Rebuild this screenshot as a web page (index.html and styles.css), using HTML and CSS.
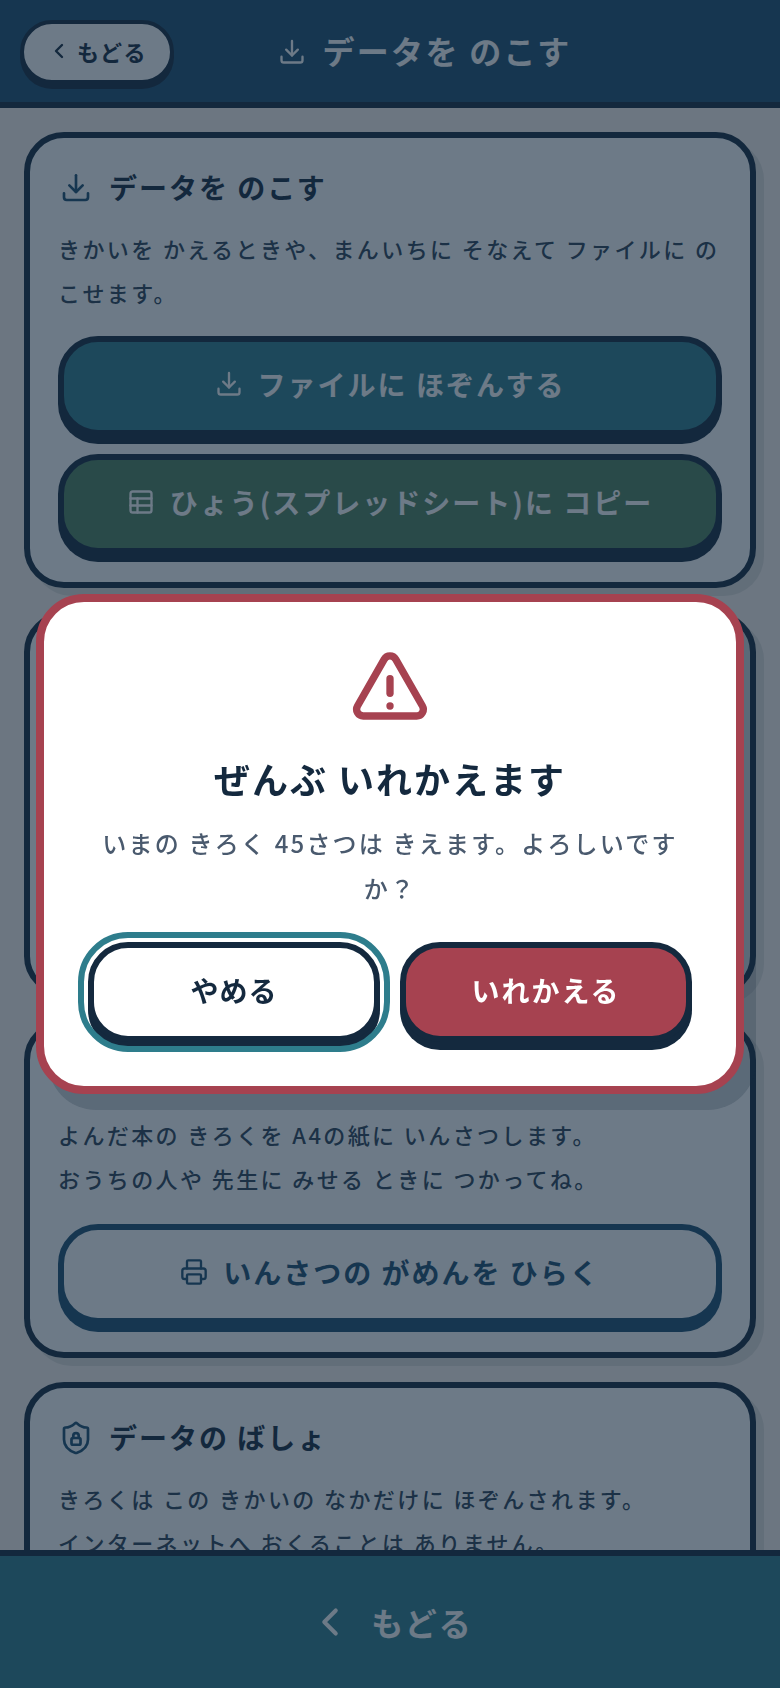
FILE: index.html
```html
<!DOCTYPE html>
<html lang="ja">
<head>
<meta charset="utf-8">
<title>データを のこす</title>
<link rel="stylesheet" href="styles.css">
</head>
<body>
<div class="app">
  <header class="topbar">
    <button class="back" type="button">
      <svg class="i i-back" viewBox="0 0 24 24"><path d="m15 18-6-6 6-6"/></svg>
      <span>もどる</span>
    </button>
    <h1 class="page-title">
      <svg class="i i-28" viewBox="0 0 24 24"><path d="M12 2.5V15"/><path d="m7 10 5 5 5-5"/><path d="M21 16v3a2 2 0 0 1-2 2H5a2 2 0 0 1-2-2v-3"/></svg>
      <span>データを のこす</span>
    </h1>
    <div class="spacer"></div>
  </header>

  <main class="content">
    <section class="card">
      <h2 class="card-title">
        <span class="ico-box"><svg class="i i-32" viewBox="0 0 24 24"><path d="M12 2.5V15"/><path d="m7 10 5 5 5-5"/><path d="M21 16v3a2 2 0 0 1-2 2H5a2 2 0 0 1-2-2v-3"/></svg></span>
        <span>データを のこす</span>
      </h2>
      <p class="body">きかいを かえるときや、まんいちに そなえて ファイルに のこせます。</p>
      <button class="btn btn-primary" type="button">
        <svg class="i i-28" viewBox="0 0 24 24"><path d="M12 2.5V15"/><path d="m7 10 5 5 5-5"/><path d="M21 16v3a2 2 0 0 1-2 2H5a2 2 0 0 1-2-2v-3"/></svg>
        <span>ファイルに ほぞんする</span>
      </button>
      <button class="btn btn-green" type="button">
        <svg class="i i-28" viewBox="0 0 24 24"><rect x="3" y="3" width="18" height="18" rx="2"/><path d="M3 9h18"/><path d="M3 15h18"/><path d="M9 9v12"/></svg>
        <span>ひょう(スプレッドシート)に コピー</span>
      </button>
    </section>

    <section class="card card-covered"></section>

    <section class="card card-print">
      <p class="body">よんだ本の きろくを A4の紙に いんさつします。<br>おうちの人や 先生に みせる ときに つかってね。</p>
      <button class="btn btn-outline" type="button">
        <svg class="i i-28" viewBox="0 0 24 24"><path d="M6 18H4a2 2 0 0 1-2-2v-5a2 2 0 0 1 2-2h16a2 2 0 0 1 2 2v5a2 2 0 0 1-2 2h-2"/><path d="M6 9V3a1 1 0 0 1 1-1h10a1 1 0 0 1 1 1v6"/><rect x="6" y="14" width="12" height="8" rx="1"/></svg>
        <span>いんさつの がめんを ひらく</span>
      </button>
    </section>

    <section class="card">
      <h2 class="card-title">
        <span class="ico-box"><svg class="i i-36" viewBox="0 0 24 24"><path d="M20 13c0 5-3.5 7.5-7.66 8.95a1 1 0 0 1-.67-.01C7.5 20.5 4 18 4 13V6a1 1 0 0 1 1-1c2 0 4.5-1.2 6.24-2.72a1.17 1.17 0 0 1 1.52 0C14.51 3.81 17 5 19 5a1 1 0 0 1 1 1z"/><rect x="9" y="12" width="6" height="4.5" rx="1"/><path d="M10.2 12v-1.5a1.8 1.8 0 0 1 3.6 0V12"/></svg></span>
        <span>データの ばしょ</span>
      </h2>
      <p class="body">きろくは この きかいの なかだけに ほぞんされます。<br>インターネットへ おくることは ありません。</p>
    </section>
  </main>

  <footer class="bottombar">
    <svg class="i i-46" viewBox="0 0 24 24"><path d="m15 18-6-6 6-6"/></svg>
    <span>もどる</span>
  </footer>
</div>

<div class="overlay">
  <div class="modal" role="dialog">
    <svg class="warn" viewBox="0 0 24 24"><path d="m21.73 18-8-14a2 2 0 0 0-3.48 0l-8 14A2 2 0 0 0 4 21h16a2 2 0 0 0 1.73-3"/><path d="M12 9.8v4.4"/><path d="M12 18h.01"/></svg>
    <h2 class="modal-title">ぜんぶ いれかえます</h2>
    <p class="modal-text">いまの きろく 45さつは きえます。よろしいですか？</p>
    <div class="modal-actions">
      <button class="mbtn mbtn-cancel" type="button">やめる</button>
      <button class="mbtn mbtn-danger" type="button">いれかえる</button>
    </div>
  </div>
</div>
</body>
</html>
```
FILE: styles.css
```css
* { box-sizing: border-box; }
html, body { margin: 0; padding: 0; height: 100%; }
body {
  font-family: "Noto Sans CJK JP", "Noto Sans", sans-serif;
  background: #fbf4ee;
  color: #14293e;
  overflow: hidden;
}
h1, h2, p { margin: 0; }
button { font-family: inherit; cursor: pointer; }

.i { fill: none; stroke: currentColor; stroke-width: 2; stroke-linecap: round; stroke-linejoin: round; flex: none; display: block; }
.i-back { width: 24px; height: 24px; stroke-width: 2.4; }
.i-28 { width: 28px; height: 28px; }
.i-32 { width: 32px; height: 32px; }
.i-36 { width: 36px; height: 36px; stroke-width: 1.8; }
.i-46 { width: 46px; height: 46px; stroke-width: 2.1; }

.app { height: 1688px; display: flex; flex-direction: column; }

.topbar {
  height: 108px;
  flex: none;
  display: flex;
  align-items: center;
  padding: 20px 20px 18px;
  background: #1c4e70;
  border-bottom: 6px solid #14293e;
  color: #fff;
}
.back {
  width: 154px;
  height: 64px;
  flex: none;
  display: flex;
  align-items: center;
  justify-content: center;
  gap: 6px;
  background: #fff;
  border: 4px solid #14293e;
  border-radius: 32px;
  box-shadow: 0 5px 0 #14293e;
  color: #14293e;
  font-size: 22px;
  font-weight: 700;
  letter-spacing: 1.5px;
  padding: 0 0 3px;
}
.page-title {
  flex: 1;
  display: flex;
  align-items: center;
  justify-content: center;
  gap: 16px;
  font-size: 32px;
  font-weight: 700;
  letter-spacing: 2.3px;
  padding-bottom: 4px;
}
.page-title .i { margin-top: 4px; }
.spacer { width: 84px; flex: none; }

.content {
  flex: 1;
  min-height: 0;
  overflow: hidden;
  padding: 24px;
  display: flex;
  flex-direction: column;
  gap: 24px;
}
.card {
  flex: none;
  background: #fff;
  border: 6px solid #14293e;
  border-radius: 40px;
  padding: 28px;
  box-shadow: 8px 8px 0 rgba(20, 41, 62, .1);
}
.card-covered { height: 384px; }
.card-print { padding-top: 70px; }
.card-print .btn { margin-top: 24px; }
.card-title {
  display: flex;
  align-items: center;
  gap: 15px;
  height: 44px;
  font-size: 28px;
  font-weight: 700;
  letter-spacing: 2px;
}
.card-title span:last-child { padding-bottom: 2px; }
.ico-box { width: 36px; display: flex; justify-content: center; color: #1c4e70; }
.body {
  margin-top: 16px;
  font-size: 22px;
  line-height: 44px;
  letter-spacing: 2.4px;
  font-weight: 500;
  color: #2b3f55;
}
.btn {
  width: 100%;
  height: 100px;
  margin-top: 22px;
  display: flex;
  align-items: center;
  justify-content: center;
  gap: 15px;
  border: 6px solid #14293e;
  border-radius: 40px;
  box-shadow: 0 8px 0 #14293e;
  color: #fff;
  font-size: 28px;
  font-weight: 700;
  letter-spacing: 2px;
  padding: 0 0 4px;
}
.btn + .btn { margin-top: 18px; }
.btn-primary { background: #2e7d8c; }
.btn-green { background: #4e805e; }
.btn-outline {
  background: #fff;
  color: #1c4e70;
  border-color: #1c4e70;
  box-shadow: 0 8px 0 #1c4e70;
}

.bottombar {
  height: 138px;
  flex: none;
  background: #2e7d8c;
  border-top: 6px solid #14293e;
  color: #fff;
  display: flex;
  align-items: center;
  justify-content: center;
  gap: 18px;
  font-size: 32px;
  font-weight: 700;
  letter-spacing: 2px;
}

.overlay {
  position: fixed;
  inset: 0;
  background: rgba(20, 41, 62, .62);
  display: flex;
  align-items: center;
  justify-content: center;
  padding: 36px;
}
.modal {
  width: 708px;
  height: 500px;
  background: #fff;
  border: 8px solid #a64250;
  border-radius: 48px;
  box-shadow: 12px 16px 0 rgba(20, 41, 62, .2);
  padding: 44px;
  display: flex;
  flex-direction: column;
  align-items: center;
  text-align: center;
}
.warn { width: 80px; height: 80px; flex: none; fill: none; stroke: #a64250; stroke-width: 2.2; stroke-linecap: round; stroke-linejoin: round; display: block; }
.modal-title {
  margin-top: 26px;
  font-size: 36px;
  line-height: 52px;
  font-weight: 700;
  letter-spacing: 2px;
}
.modal-text {
  margin-top: 16px;
  font-size: 24px;
  line-height: 45px;
  letter-spacing: 2.2px;
  font-weight: 500;
  color: #4a5a6e;
}
.modal-actions {
  margin-top: auto;
  width: 100%;
  display: flex;
  gap: 20px;
}
.mbtn {
  flex: 1;
  height: 100px;
  border: 6px solid #14293e;
  border-radius: 40px;
  box-shadow: 0 8px 0 #14293e;
  font-size: 28px;
  font-weight: 700;
  letter-spacing: 1px;
  padding: 0 0 4px;
}
.mbtn-cancel {
  background: #fff;
  color: #14293e;
  outline: 6px solid #2e7d8c;
  outline-offset: 4px;
}
.mbtn-danger { background: #a64250; color: #fff; letter-spacing: 2px; }
```
